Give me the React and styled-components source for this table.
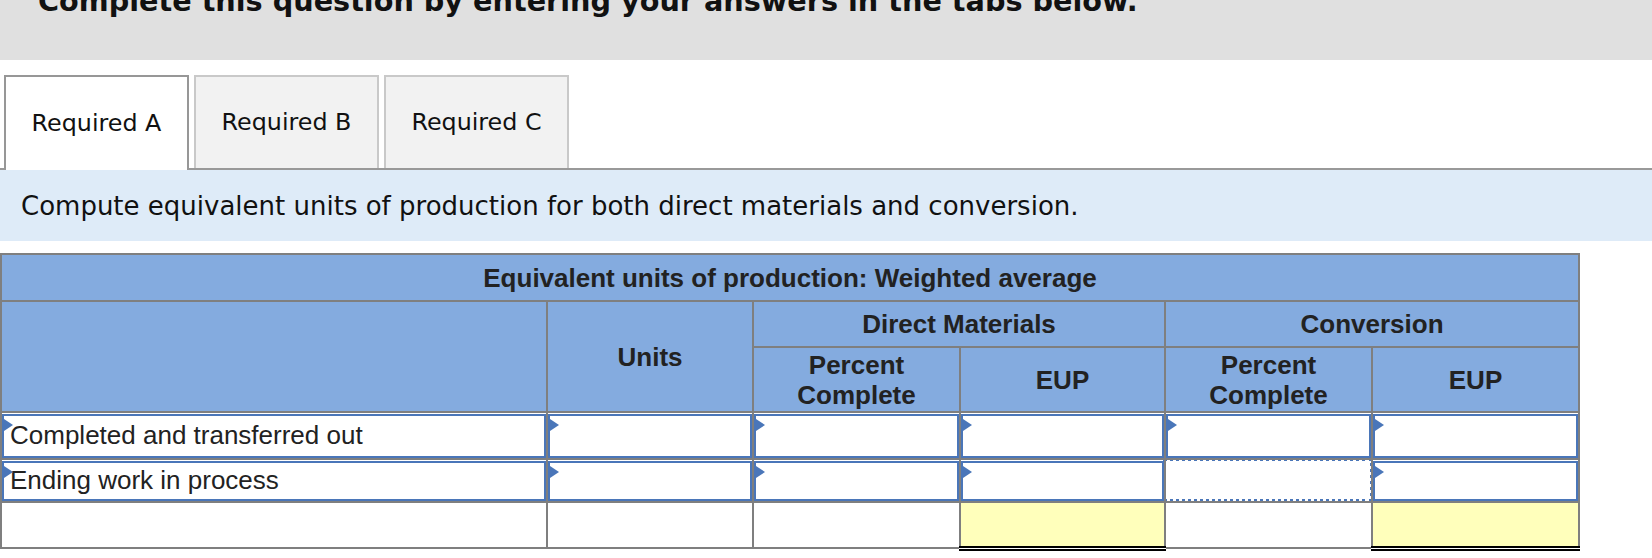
import React from "react";
import styled, { createGlobalStyle } from "styled-components";

const GlobalStyle = createGlobalStyle`
  body {
    margin: 0;
    background: #ffffff;
    font-family: "DejaVu Sans", Verdana, sans-serif;
    color: #111;
  }
`;

const Banner = styled.div`
  height: 60px;
  background: #e0e0e0;
  overflow: hidden;
  padding-left: 38px;
`;

const BannerText = styled.div`
  margin-top: -11px;
  font-size: 28.7px;
  line-height: 24px;
  font-weight: bold;
  white-space: nowrap;
`;

const TabBar = styled.div`
  display: flex;
  gap: 5px;
  margin-top: 15px;
  padding-left: 4px;
  border-bottom: 2px solid #999;
`;

const Tab = styled.div`
  width: 185px;
  height: ${(p) => (p.$active ? 95 : 93)}px;
  box-sizing: border-box;
  margin-bottom: ${(p) => (p.$active ? -2 : 0)}px;
  display: flex;
  align-items: center;
  justify-content: center;
  font-size: 23.8px;
  background: ${(p) => (p.$active ? "#ffffff" : "#f2f2f2")};
  border: 2px solid ${(p) => (p.$active ? "#979797" : "#c9c9c9")};
  border-bottom: none;
  padding-bottom: 2px;
`;

const Instruction = styled.div`
  height: 71px;
  background: #deebf8;
  display: flex;
  align-items: center;
  padding-left: 21px;
  font-size: 26px;
  margin-bottom: 12px;
`;

const Grid = styled.table`
  border-collapse: collapse;
  width: 1578px;
  table-layout: fixed;
  font-family: "Liberation Sans", Arial, sans-serif;
  font-size: 26px;
  color: #222;
`;

const Col = styled.col`
  width: ${(p) => p.$w}px;
`;

const Head = styled.th`
  background: #84abdf;
  border: 2px solid #7f7f7f;
  font-weight: bold;
  text-align: center;
  vertical-align: middle;
  height: ${(p) => p.$h}px;
  padding: 0 4px;
  line-height: 30px;
  box-sizing: border-box;
`;

const Cell = styled.td`
  border: 2px solid #7f7f7f;
  padding: 0;
  height: ${(p) => p.$h}px;
  box-sizing: border-box;
  background: #ffffff;
`;

const TotalCell = styled(Cell)`
  background: ${(p) => (p.$total ? "#ffffbb" : "#ffffff")};
  border-top: ${(p) => (p.$total ? "2px solid #000" : "2px solid #7f7f7f")};
  border-bottom: ${(p) => (p.$total ? "5px double #000" : "2px solid #7f7f7f")};
`;

const InputBox = styled.div`
  position: relative;
  box-sizing: border-box;
  height: ${(p) => p.$h}px;
  border: 2px solid #4a76b9;
  padding-left: 6px;
  display: flex;
  align-items: center;
  white-space: nowrap;

  &::before {
    content: "";
    position: absolute;
    left: 0;
    top: 3px;
    border-left: 9px solid #4a76b9;
    border-top: 6px solid transparent;
    border-bottom: 6px solid transparent;
  }
`;

const FocusBox = styled.div`
  box-sizing: border-box;
  height: ${(p) => p.$h + 4}px;
  margin: -3px -2px -1px -3px;
  border: 3px dotted #4a76b9;
`;

const rows = [
  { label: "Completed and transferred out", h: 44, focus: -1 },
  { label: "Ending work in process", h: 40, focus: 3 },
];

export default function App() {
  return (
    <>
      <GlobalStyle />
      <Banner>
        <BannerText>
          Complete this question by entering your answers in the tabs below.
        </BannerText>
      </Banner>

      <TabBar>
        <Tab $active>Required A</Tab>
        <Tab>Required B</Tab>
        <Tab>Required C</Tab>
      </TabBar>

      <Instruction>
        Compute equivalent units of production for both direct materials and
        conversion.
      </Instruction>

      <Grid>
        <colgroup>
          <Col $w={546} />
          <Col $w={206} />
          <Col $w={207} />
          <Col $w={205} />
          <Col $w={207} />
          <Col $w={207} />
        </colgroup>
        <thead>
          <tr>
            <Head colSpan={6} $h={47}>
              Equivalent units of production: Weighted average
            </Head>
          </tr>
          <tr>
            <Head rowSpan={2} $h={46} />
            <Head rowSpan={2} $h={46}>
              Units
            </Head>
            <Head colSpan={2} $h={46}>
              Direct Materials
            </Head>
            <Head colSpan={2} $h={46}>
              Conversion
            </Head>
          </tr>
          <tr>
            <Head $h={65}>
              Percent
              <br />
              Complete
            </Head>
            <Head $h={65}>EUP</Head>
            <Head $h={65}>
              Percent
              <br />
              Complete
            </Head>
            <Head $h={65}>EUP</Head>
          </tr>
        </thead>
        <tbody>
          {rows.map((row) => (
            <tr key={row.label}>
              <Cell $h={row.h + 3}>
                <InputBox $h={row.h}>{row.label}</InputBox>
              </Cell>
              {[0, 1, 2, 3, 4].map((i) => (
                <Cell key={i} $h={row.h + 3}>
                  {row.focus === i ? (
                    <FocusBox $h={row.h} />
                  ) : (
                    <InputBox $h={row.h} />
                  )}
                </Cell>
              ))}
            </tr>
          ))}
          <tr>
            {[false, false, false, true, false, true].map((total, i) => (
              <TotalCell key={i} $h={46} $total={total} />
            ))}
          </tr>
        </tbody>
      </Grid>
    </>
  );
}
